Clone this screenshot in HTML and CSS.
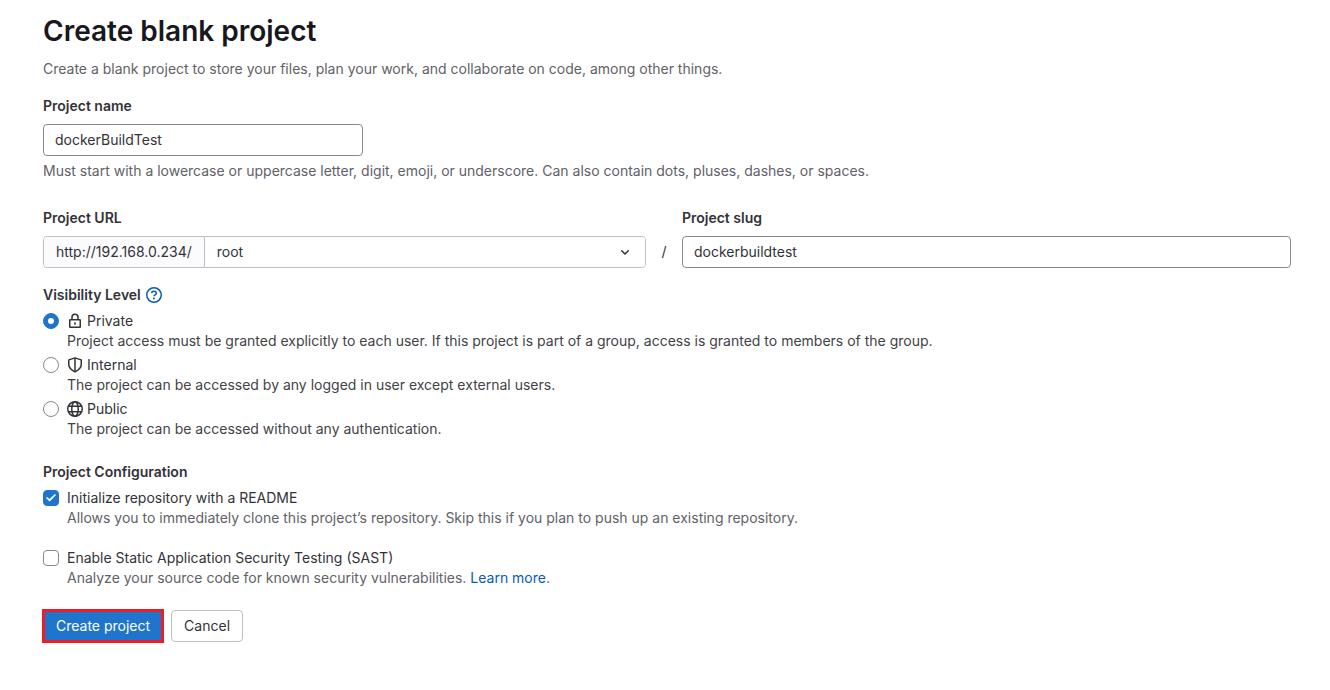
FILE: index.html
```
<!DOCTYPE html>
<html lang="en">
<head>
<meta charset="utf-8">
<title>Create blank project</title>
<link rel="stylesheet" href="styles.css">
</head>
<body>
<main class="page">
  <h1 class="page-title">Create blank project</h1>
  <p class="page-lead">Create a blank project to store your files, plan your work, and collaborate on code, among other things.</p>
  <form class="form">
    <div class="field">
      <label class="label" for="name">Project name</label>
      <input class="input input-name" id="name" type="text" value="dockerBuildTest">
      <p class="help">Must start with a lowercase or uppercase letter, digit, emoji, or underscore. Can also contain dots, pluses, dashes, or spaces.</p>
    </div>

    <div class="path-row">
      <div class="field">
        <label class="label" for="namespace">Project URL</label>
        <div class="input-group">
          <span class="prefix">http://192.168.0.234/</span>
          <div class="select-wrap">
            <select class="select" id="namespace"><option>root</option></select>
            <svg class="chevron" viewBox="0 0 16 16" width="16" height="16" aria-hidden="true"><path d="M4.750 6.750 8 10l3.250-3.250" fill="none" stroke="currentColor" stroke-width="1.500" stroke-linecap="round" stroke-linejoin="round"/></svg>
          </div>
        </div>
      </div>
      <span class="slash">/</span>
      <div class="field">
        <label class="label" for="slug">Project slug</label>
        <input class="input" id="slug" type="text" value="dockerbuildtest">
      </div>
    </div>

    <fieldset class="group visibility">
      <legend class="label legend">Visibility Level
        <a class="help-link" href="#" aria-label="Help"><svg viewBox="0 0 16 16" width="16" height="16" fill="none" stroke="currentColor" stroke-width="1.500"><circle cx="8" cy="8" r="7.250"/><path d="M5.700 6.300C5.700 4.900 6.700 4.250 8 4.250s2.300.8 2.300 1.950c0 1.600-2.300 1.600-2.300 3.100"/><circle cx="8" cy="11.500" r="1" fill="currentColor" stroke="none"/></svg></a>
      </legend>
      <div class="option">
        <input class="radio" type="radio" name="visibility" id="private" checked>
        <div>
          <label class="option-label" for="private"><svg viewBox="0 0 16 16" width="16" height="16" fill="none" stroke="currentColor" stroke-width="1.500" aria-hidden="true"><rect x="2.750" y="6.750" width="10.500" height="7.500" rx=".5"/><path d="M5 6.500V4.250a3 3 0 0 1 6 0V6.500"/><path d="M8 9.250v2.500"/></svg>Private</label>
          <p class="option-text">Project access must be granted explicitly to each user. If this project is part of a group, access is granted to members of the group.</p>
        </div>
      </div>
      <div class="option">
        <input class="radio" type="radio" name="visibility" id="internal">
        <div>
          <label class="option-label" for="internal"><svg viewBox="0 0 16 16" width="16" height="16" fill="none" stroke="currentColor" stroke-width="1.500" stroke-linejoin="round" aria-hidden="true"><path d="M8 .9 1.750 2.900v4.600c0 3.200 2.700 5.600 6.250 7.400 3.550-1.800 6.250-4.200 6.250-7.400V2.900z"/><path d="M8 1v13.500"/></svg>Internal</label>
          <p class="option-text">The project can be accessed by any logged in user except external users.</p>
        </div>
      </div>
      <div class="option">
        <input class="radio" type="radio" name="visibility" id="public">
        <div>
          <label class="option-label" for="public"><svg viewBox="0 0 16 16" width="16" height="16" fill="none" stroke="currentColor" stroke-width="1.500" aria-hidden="true"><circle cx="8" cy="8" r="7.250"/><ellipse cx="8" cy="8" rx="3.250" ry="7.250"/><path d="M1.500 5.250h13M1.500 10.750h13"/></svg>Public</label>
          <p class="option-text">The project can be accessed without any authentication.</p>
        </div>
      </div>
    </fieldset>

    <fieldset class="group config">
      <legend class="label legend">Project Configuration</legend>
      <div class="option">
        <input class="checkbox" type="checkbox" id="readme" checked>
        <div>
          <label class="option-label" for="readme">Initialize repository with a README</label>
          <p class="option-text muted">Allows you to immediately clone this project’s repository. Skip this if you plan to push up an existing repository.</p>
        </div>
      </div>
      <div class="option">
        <input class="checkbox" type="checkbox" id="sast">
        <div>
          <label class="option-label" for="sast">Enable Static Application Security Testing (SAST)</label>
          <p class="option-text muted">Analyze your source code for known security vulnerabilities. <a class="link" href="#">Learn more</a>.</p>
        </div>
      </div>
    </fieldset>

    <div class="actions">
      <button class="button button-confirm" type="submit">Create project</button>
      <button class="button" type="button">Cancel</button>
    </div>
  </form>
</main>
</body>
</html>
```
FILE: styles.css
```
* { box-sizing: border-box; }

body {
  margin: 0;
  background: #fff;
  color: #333238;
  font: 14px/20px Inter, "Liberation Sans", sans-serif;
}

p, h1 { margin: 0; }

input, select, button { font: inherit; color: inherit; margin: 0; }

.page { padding: 13px 39px 48px 43px; }

.page-title {
  color: #18171d;
  font-size: 28px;
  font-weight: 600;
  line-height: 36px;
}

.page-lead { margin-top: 10px; color: #626168; }

.form { margin-top: 17px; }

.label { display: block; font-weight: 600; }

.input {
  display: block;
  width: 100%;
  height: 32px;
  margin-top: 8px;
  padding: 0 11px 2px;
  border: 1px solid #89888d;
  border-radius: 4px;
  background: #fff;
}

.input-name { max-width: 320px; }

.help { margin-top: 5px; color: #626168; }

.path-row {
  display: grid;
  grid-template-columns: 99fr 36px 100fr;
  align-items: end;
  margin-top: 27px;
}

.slash { line-height: 32px; text-align: center; }

.input-group {
  display: flex;
  height: 32px;
  margin-top: 8px;
  border: 1px solid #bfbfc3;
  border-radius: 4px;
  overflow: hidden;
}

.prefix {
  padding: 0 12px;
  border-right: 1px solid #bfbfc3;
  background: #fbfafd;
  line-height: 30px;
}

.select-wrap { position: relative; flex: 1; }

.select {
  appearance: none;
  width: 100%;
  height: 30px;
  padding: 0 32px 0 12px;
  border: 0;
  background: #fff;
}

.chevron { position: absolute; top: 7px; right: 12px; pointer-events: none; }

.group { min-width: 0; margin: 0; padding: 0; border: 0; }

.visibility { margin-top: 17px; }

.config { margin-top: 23px; }

.legend { display: flex; align-items: center; gap: 5px; padding: 0; margin-bottom: 6px; }

.help-link { display: flex; color: #0b5cad; }

.option { display: flex; align-items: flex-start; gap: 8px; }

.visibility .option + .option { margin-top: 4px; }

.config .option + .option { margin-top: 20px; }

.option-label { display: flex; align-items: center; gap: 4px; }

.option-text { color: #434248; }

.option-text.muted { color: #626168; }

.radio, .checkbox {
  appearance: none;
  display: grid;
  flex: none;
  place-items: center;
  width: 16px;
  height: 16px;
  margin-top: 2px;
  border: 1px solid #89888d;
  background: #fff;
}

.radio { border-radius: 50%; }

.checkbox { border-radius: 4px; }

.radio:checked, .checkbox:checked { border-color: #1f75cb; background: #1f75cb; }

.radio:checked::before {
  content: "";
  width: 6px;
  height: 6px;
  border-radius: 50%;
  background: #fff;
}

.checkbox:checked::before {
  content: "";
  width: 10px;
  height: 8px;
  background: #fff;
  clip-path: polygon(0 50%, 11% 36%, 35% 64%, 89% 0, 100% 14%, 36% 94%);
}

.link { color: #0b5cad; text-decoration: none; }

.actions { display: flex; gap: 8px; margin-top: 22px; }

.button {
  height: 32px;
  padding: 0 12px;
  border: 1px solid #bfbfc3;
  border-radius: 4px;
  background: #fff;
}

.button-confirm {
  border-color: #1f75cb;
  border-radius: 0;
  background: #1f75cb;
  color: #fff;
  outline: 3px solid #ee1c25;
  outline-offset: -2px;
}
```
